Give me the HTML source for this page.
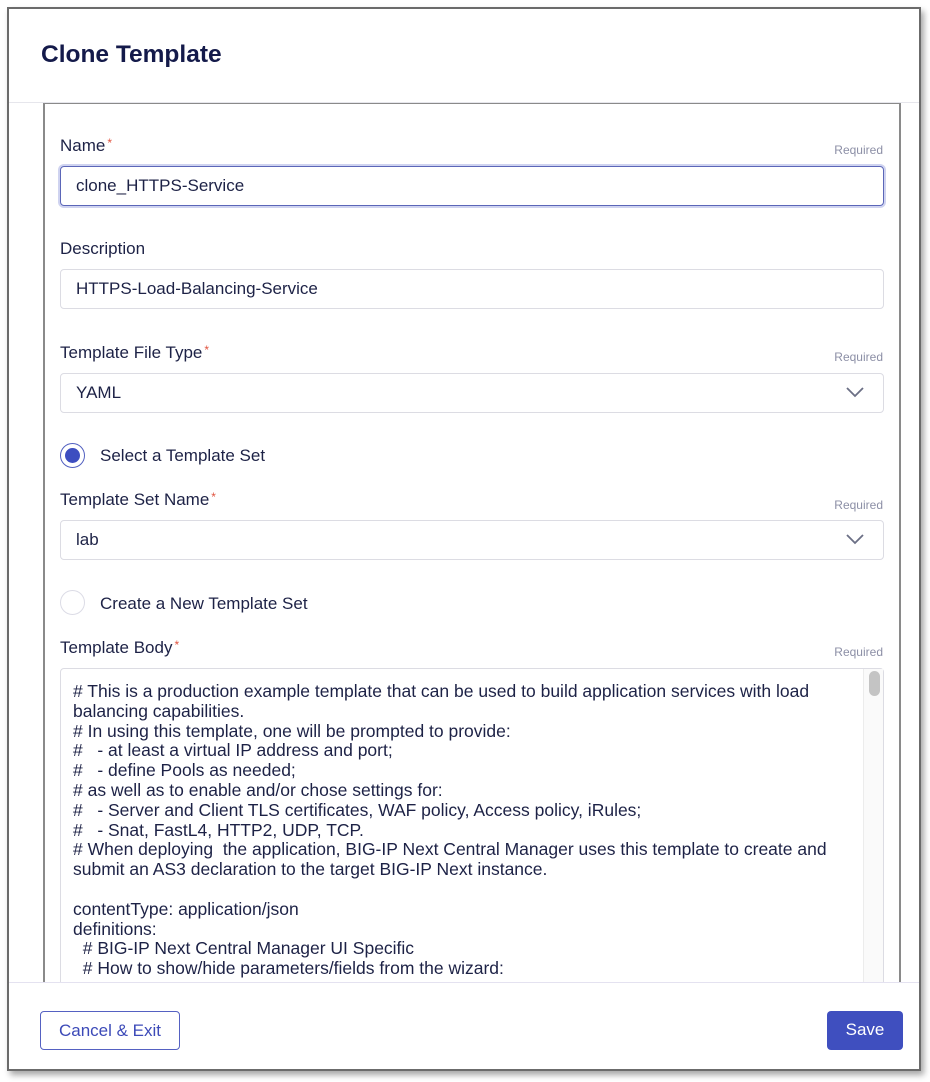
<!DOCTYPE html>
<html><head><meta charset="utf-8"><style>
*{box-sizing:border-box;margin:0;padding:0}
body{width:930px;height:1082px;background:#fff;font-family:"Liberation Sans",Arial,sans-serif;color:#1d2246;position:relative;overflow:hidden}
.frame{position:absolute;left:7px;top:7px;width:914px;height:1064px;border:2px solid #6b6b6b;background:#fff;box-shadow:3px 4px 6px rgba(0,0,0,.35);overflow:hidden}
.hdr{position:absolute;left:0;top:0;right:0;height:94px;border-bottom:1px solid #e6e6ec}
.hdr h1{position:absolute;left:32px;top:32px;font-size:24.5px;font-weight:bold;color:#141a4a}
.inner{position:absolute;left:34px;top:94px;width:858px;height:900px;border:2px solid #8a8a8a;border-top:1px solid #8a8a8a}
.abs{position:absolute}
.lbl{font-size:17px;color:#1d2246}
.lbl b{color:#e0533f;font-weight:normal;font-size:12px;vertical-align:top;margin-left:2px}
.req{font-size:12px;color:#8c8fa6;position:absolute;right:36px}
.inp{position:absolute;left:51px;width:824px;height:40px;border:1px solid #dcdce3;border-radius:4px;font-size:17px;padding:9px 15px;color:#1d2246}
.radio{position:absolute;left:51px;width:25px;height:25px;border-radius:50%;border:1px solid #dcdce6}
.chev{position:absolute;right:18px;top:12px}
.ta{position:absolute;left:51px;top:659px;width:824px;height:400px;border:1px solid #dcdce3;border-radius:4px;font-size:17.5px;line-height:19.8px;padding:13px 12px;white-space:pre;color:#1d2246}
.sb{position:absolute;right:0;top:0;width:20px;height:100%;border-left:1px solid #ececec;background:#fafafa}
.sb i{position:absolute;left:5px;top:2px;width:11px;height:25px;border-radius:6px;background:#c4c4c4}
.ftr{position:absolute;left:0;right:0;top:973px;bottom:0;background:#fff;border-top:1px solid #e4e2f0}
.btn{position:absolute;top:28px;height:39px;border-radius:4px;font-size:17px;text-align:center;line-height:37px}
</style></head><body>
<div class="frame">
 <div class="hdr"><h1>Clone Template</h1></div>
 <div class="inner"></div>
 <div class="abs lbl" style="left:51px;top:127px">Name<b>*</b></div>
 <div class="req" style="top:134px">Required</div>
 <div class="inp" style="top:157px;border:1px solid #5b66b8;box-shadow:0 0 0 2px #cfd3f0">clone_HTTPS-Service</div>
 <div class="abs lbl" style="left:51px;top:230px">Description</div>
 <div class="inp" style="top:260px">HTTPS-Load-Balancing-Service</div>
 <div class="abs lbl" style="left:51px;top:334px">Template File Type<b>*</b></div>
 <div class="req" style="top:341px">Required</div>
 <div class="inp" style="top:364px">YAML<svg class="chev" width="20" height="12" viewBox="0 0 20 12"><path d="M2 2l8 8 8-8" fill="none" stroke="#6b6f85" stroke-width="1.8"/></svg></div>
 <div class="radio" style="top:434px;border-color:#5260c0"><div style="position:absolute;left:4px;top:4px;width:15px;height:15px;border-radius:50%;background:#3d4ec0"></div></div>
 <div class="abs lbl" style="left:91px;top:437px">Select a Template Set</div>
 <div class="abs lbl" style="left:51px;top:481px">Template Set Name<b>*</b></div>
 <div class="req" style="top:489px">Required</div>
 <div class="inp" style="top:511px">lab<svg class="chev" width="20" height="12" viewBox="0 0 20 12"><path d="M2 2l8 8 8-8" fill="none" stroke="#6b6f85" stroke-width="1.8"/></svg></div>
 <div class="radio" style="top:581px"></div>
 <div class="abs lbl" style="left:91px;top:585px">Create a New Template Set</div>
 <div class="abs lbl" style="left:51px;top:629px">Template Body<b>*</b></div>
 <div class="req" style="top:636px">Required</div>
 <div class="ta"># This is a production example template that can be used to build application services with load
balancing capabilities.
# In using this template, one will be prompted to provide:
#   - at least a virtual IP address and port;
#   - define Pools as needed;
# as well as to enable and/or chose settings for:
#   - Server and Client TLS certificates, WAF policy, Access policy, iRules;
#   - Snat, FastL4, HTTP2, UDP, TCP.
# When deploying  the application, BIG-IP Next Central Manager uses this template to create and
submit an AS3 declaration to the target BIG-IP Next instance.

contentType: application/json
definitions:
  # BIG-IP Next Central Manager UI Specific
  # How to show/hide parameters/fields from the wizard:<div class="sb"><i></i></div></div>
 <div class="ftr">
  <div class="btn" style="left:31px;width:140px;border:1px solid #5561c2;color:#3c4ab8">Cancel &amp; Exit</div>
  <div class="btn" style="left:818px;width:76px;background:#3f4fbf;color:#fff">Save</div>
 </div>
</div>
</body></html>
